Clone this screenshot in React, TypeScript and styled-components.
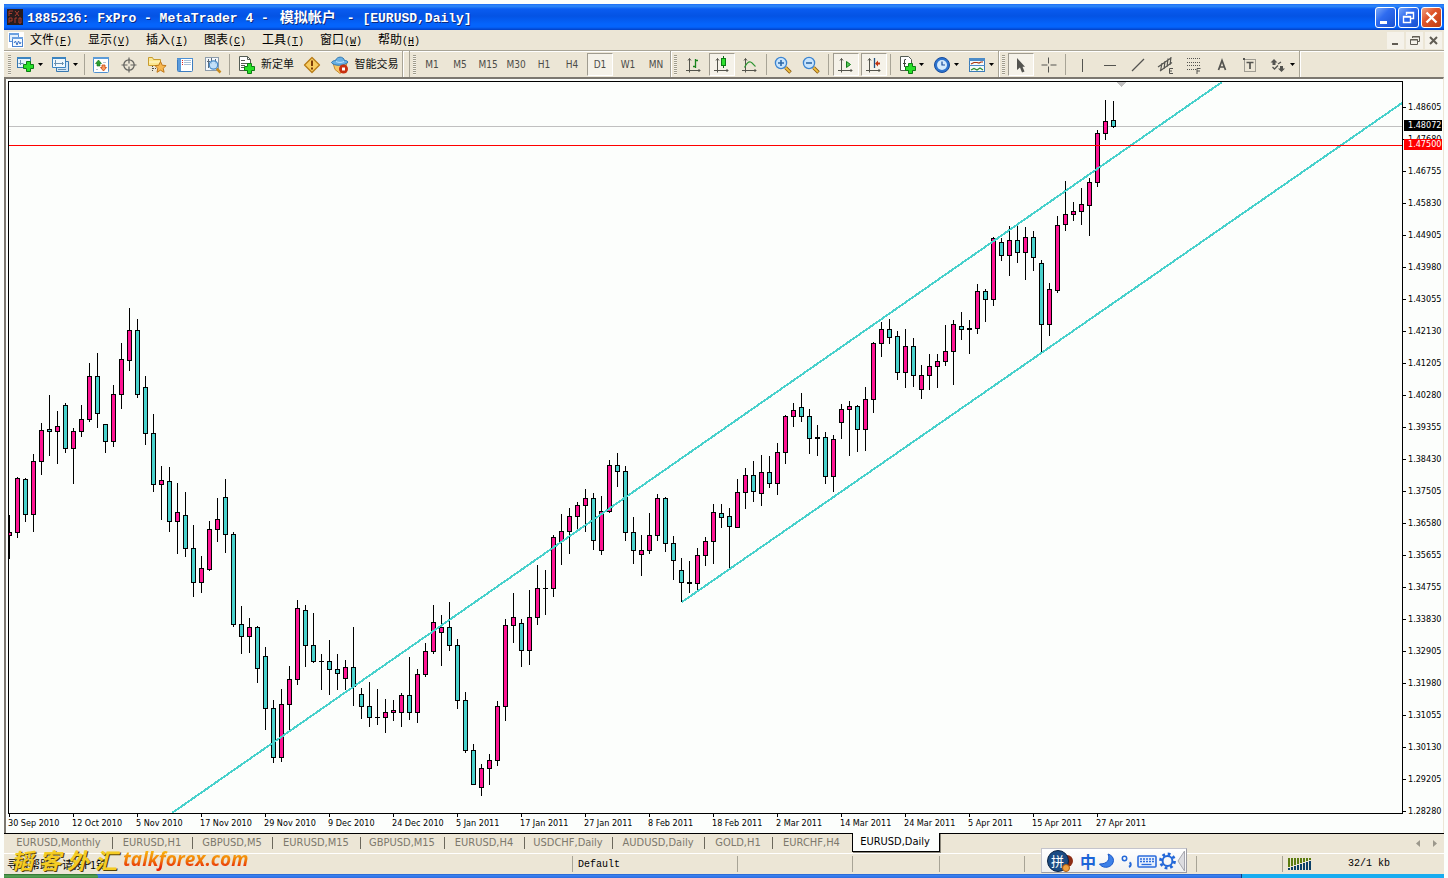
import React from "react";
import styled, { createGlobalStyle, css } from "styled-components";

const FACE = "#ece6d6";
const EDGE = "#a8a496";
const UI_FONT = '"DejaVu Sans Condensed", "DejaVu Sans", "Noto Sans CJK SC", sans-serif';
const MONO_FONT = '"Liberation Mono", "Noto Sans CJK SC", monospace';
const CJK_FONT = '"Noto Sans CJK SC", sans-serif';

const GlobalStyle = createGlobalStyle`
  *, *::before, *::after { box-sizing: border-box; }
  body { margin: 0; background: #fcfefc; overflow: hidden; }
  button { margin: 0; padding: 0; border: 0; background: none; color: inherit; font: inherit; }
`;

/* ---------- shell ---------- */

const Window = styled.div`
  display: flex;
  flex-direction: column;
  margin: 4px 4px 0;
  background: ${FACE};
  font-family: ${UI_FONT};
`;

const TitleBar = styled.header`
  display: flex;
  align-items: center;
  height: 26px;
  padding: 0 2px 0 3px;
  background: linear-gradient(#1c6cf4 0, #2f8af8 2px, #0a5cf0 5px, #0453e4 12px, #0464fc 20px, #0464fc 23px, #0340c4 26px);
`;

const TitleText = styled.h1`
  display: flex;
  flex: 1;
  align-items: baseline;
  gap: 11px;
  min-width: 0;
  margin: 0 0 0 4px;
  color: #fff;
  font: bold 13px/20px ${MONO_FONT};
  text-shadow: 1px 1px 0 #0a2a80;
  white-space: nowrap;
`;

const AccountKind = styled.span`
  font: bold 14px/20px ${CJK_FONT};
`;

const CaptionButtons = styled.div`
  display: flex;
  gap: 2px;
`;

const CaptionButton = styled.button<{ $danger?: boolean }>`
  width: 21px;
  height: 21px;
  border: 1px solid #fff;
  border-radius: 3px;
  background: ${(p) =>
    p.$danger
      ? "linear-gradient(135deg, #f0a080, #e0552c 40%, #c03c10)"
      : "linear-gradient(135deg, #7ba8f8, #2f6cf0 40%, #1850d0)"};
  svg { display: block; }
`;

const MenuBar = styled.nav`
  display: flex;
  align-items: center;
  height: 20px;
  padding: 0 2px 0 4px;
`;

const MenuList = styled.div`
  display: flex;
  flex: 1;
  padding-left: 6px;
`;

const MenuButton = styled.button`
  width: 58px;
  color: #000;
  font: 12px/18px ${CJK_FONT};
  text-align: left;
  white-space: nowrap;
`;

const MenuKey = styled.span`
  font: 10px/18px ${MONO_FONT};
`;

const ChildButtons = styled.div`
  display: flex;
  gap: 2px;
`;

const ChildButton = styled.button`
  width: 17px;
  height: 17px;
  background: #f5f2ea;
  svg { display: block; }
`;

/* ---------- toolbar ---------- */

const Toolbar = styled.div`
  display: flex;
  height: 27px;
  border-top: 1px solid ${EDGE};
  box-shadow: inset 0 1px 0 #fff;
  overflow: hidden;
`;

const Band = styled.div<{ $first?: boolean }>`
  display: flex;
  align-items: center;
  height: 26px;
  padding: 1px 0 0 ${(p) => (p.$first ? 4 : 3)}px;
  border-right: 1px solid ${EDGE};
  box-shadow: 1px 0 0 #fff;
`;

const BandGap = styled.div`
  width: 7px;
  border-right: 1px solid ${EDGE};
`;

const Grip = styled.div<{ $after?: number }>`
  width: 3px;
  height: 20px;
  margin-right: ${(p) => p.$after ?? 2}px;
  background: repeating-linear-gradient(#a09c8c 0 1px, #f6f3ea 1px 2px);
`;

const Separator = styled.div<{ $gap?: number }>`
  flex: none;
  width: 1px;
  height: 21px;
  margin: 0 ${(p) => p.$gap ?? 2}px;
  background: ${EDGE};
`;

const ToolButton = styled.button<{ $w?: number; $on?: boolean }>`
  display: flex;
  flex: none;
  align-items: center;
  justify-content: center;
  gap: 2px;
  width: ${(p) => (p.$w ?? 28) - 2}px;
  height: 23px;
  margin: 0 1px;
  border: 1px solid transparent;
  color: #4c4c48;
  font: 10px/20px ${UI_FONT};
  ${(p) =>
    p.$on &&
    css`
      border-color: #a09c90 #fff #fff #a09c90;
      background: #f5f2e9;
    `}
`;

const ToolLabel = styled.span`
  padding: 0 0 3px 3px;
  color: #111;
  font: 11px/16px ${CJK_FONT};
  white-space: nowrap;
`;

/* ---------- chart ---------- */

const ChartWindow = styled.main`
  display: grid;
  grid-template: 733px 17px / minmax(0, 1fr) 40px;
  padding: 2px 0 2px 2px;
  border: solid #7c7870;
  border-width: 2px 0 0 2px;
  border-right: 1px solid ${FACE};
  background: #fcfefc;
`;

const Plot = styled.svg`
  display: block;
  width: 100%;
  height: 733px;
  border: 1px solid #000;
`;

const PriceAxis = styled.div`
  position: relative;
  grid-row: span 2;
  padding-top: 10px;
  overflow: hidden;
`;

const Price = styled.div`
  display: flex;
  align-items: center;
  gap: 2px;
  height: 32px;
  color: #000;
  font: 9px/12px ${UI_FONT};
  &::before {
    content: "";
    width: 3px;
    height: 1px;
    background: #000;
  }
`;

const PriceTag = styled.div<{ $y: number; $c: string }>`
  position: absolute;
  top: ${(p) => p.$y}px;
  left: 1px;
  width: 38px;
  padding-left: 4px;
  background: ${(p) => p.$c};
  color: #fff;
  font: 9px/11px ${UI_FONT};
`;

const DateAxis = styled.div`
  display: flex;
  overflow: hidden;
`;

const DateMark = styled.div`
  flex: none;
  width: 64px;
  color: #000;
  font: 9px/12px ${UI_FONT};
  white-space: nowrap;
  &::before {
    content: "";
    display: block;
    width: 1px;
    height: 3px;
    margin-left: 1px;
    background: #000;
  }
`;

/* ---------- footer ---------- */

const Footer = styled.footer`
  position: relative;
`;

const TabStrip = styled.div`
  display: flex;
  height: 20px;
  padding-left: 2px;
  border-top: 1px solid #000;
`;

const Tab = styled.button<{ $w: number; $active?: boolean; $last?: boolean }>`
  position: relative;
  flex: none;
  width: ${(p) => p.$w}px;
  height: 18px;
  padding-right: 2px;
  color: #7c786c;
  font: 11px/18px ${UI_FONT};
  text-align: center;
  white-space: nowrap;
  ${(p) =>
    p.$active
      ? css`
          margin-top: -1px;
          height: 19px;
          border: solid #000;
          border-width: 0 1px 1px;
          background: #fcfefc;
          color: #000;
          box-shadow: 1px 1px 0 #8c887c;
        `
      : !p.$last &&
        css`
          &::after {
            content: "";
            position: absolute;
            top: 3px;
            right: 0;
            width: 1px;
            height: 12px;
            background: #6c685c;
          }
        `}
`;

const TabScroll = styled.div`
  display: flex;
  gap: 13px;
  align-items: center;
  margin-left: auto;
  padding-right: 7px;
  svg { display: block; }
`;

const StatusBar = styled.div`
  display: flex;
  height: 21px;
  align-items: center;
  border-top: 1px solid #fff;
  color: #000;
  font: 10px/18px ${MONO_FONT};
`;

const StatusCell = styled.div<{ $w?: number }>`
  flex: ${(p) => (p.$w ? "none" : "1")};
  width: ${(p) => (p.$w ? p.$w + "px" : "auto")};
  min-width: 0;
  height: 16px;
  padding-left: 5px;
  border-left: 1px solid ${EDGE};
  line-height: 18px;
  white-space: nowrap;
`;

const HelpCell = styled(StatusCell)`
  padding-left: 2px;
  border-left-color: transparent;
  font: 11px/16px ${CJK_FONT};
`;

const TrafficCell = styled(StatusCell)`
  display: flex;
  align-items: center;
  gap: 36px;
`;

const TaskBar = styled.div`
  display: flex;
  height: 4px;
  background: linear-gradient(#1c54c0, #3c84f0 1px, #2c6ce0);
`;

const StartEdge = styled.div`
  width: 94px;
  border-radius: 0 3px 0 0;
  background: linear-gradient(#2c6c2c, #58a458 2px, #3c8c3c);
`;

const TrayEdge = styled.div`
  width: 203px;
  margin-left: auto;
  border-left: 1px solid #103c80;
  background: #18acf0;
`;

const Watermark = styled.div`
  position: absolute;
  top: 12px;
  left: 7px;
  display: flex;
  align-items: center;
  gap: 6px;
  height: 28px;
  white-space: nowrap;
  pointer-events: none;
`;

const MarkCjk = styled.span`
  display: flex;
  gap: 6px;
  color: #f4cc24;
  font: italic 700 22px/28px ${CJK_FONT};
  text-shadow: 1px 1px 0 #504008;
`;

const MarkUrl = styled.span`
  background: linear-gradient(#f8b010 25%, #f07808 55%, #e82808 80%);
  background-clip: text;
  color: transparent;
  font: italic 700 19px/28px "Open Sans", "Noto Sans", sans-serif;
`;

const ImeBar = styled.div`
  position: absolute;
  top: 15px;
  right: 257px;
  display: flex;
  align-items: center;
  width: 146px;
  height: 25px;
  padding-left: 5px;
  border: 1px solid #c4c4cc;
  border-right-color: #9c9ca4;
  border-bottom-color: #9c9ca4;
  background: linear-gradient(#fff, #f0f0f0);
  color: #1c64d8;
  svg { display: block; flex: none; }
`;

const ImeMode = styled.span`
  width: 20px;
  margin-left: 4px;
  font: bold 16px/20px ${CJK_FONT};
  text-align: center;
`;

/* ---------- icons ---------- */

type IconProps = { children: React.ReactNode; w?: number; h?: number };

const Icon = ({ children, w = 20, h = 20 }: IconProps) => (
  <svg width={w} height={h} viewBox={`0 0 ${w} ${h}`} fill="none" aria-hidden="true">
    {children}
  </svg>
);

const DropArrow = () => (
  <Icon w={5} h={3}>
    <path d="M0 0h5L2.500 3z" fill="#000" />
  </Icon>
);

const Plus = ({ x, y }: { x: number; y: number }) => (
  <path
    transform={`translate(${x} ${y})`}
    d="M3.500.5h4v3h3v4h-3v3h-4v-3h-3v-4h3z"
    fill="#28e028"
    stroke="#0c7c14"
  />
);

const NewChartIcon = () => (
  <Icon>
    <rect x="1.500" y="2.500" width="13" height="10" fill="#e8f4fc" stroke="#3878b0" />
    <path d="M1 2h14v2H1z" fill="#3c84c0" />
    <path d="M4.500 5v5M2.500 8.500h5" stroke="#6890b0" />
    <Plus x={7} y={6} />
  </Icon>
);

const ProfilesIcon = () => (
  <Icon>
    <path d="M5.500 6.500h12v10h-12z" fill="#d4e8f8" stroke="#3878b0" />
    <path d="M1.500 2.500h13v10h-13z" fill="#f0f8fc" stroke="#3c84c0" />
    <path d="M1 2h14v2H1z" fill="#3c84c0" />
    <path d="M4.500 5v6M3 8.500h9M11 7l1.500 1.500L11 10M7 14.500h8" stroke="#6890b0" />
  </Icon>
);

const MarketWatchIcon = () => (
  <Icon>
    <rect x="2.500" y="2.500" width="15" height="15" rx="1" fill="#fff" stroke="#5090d0" />
    <path d="M2 2h16v2H2z" fill="#5c9cd8" />
    <path d="M7.500 5l3 3.500H9v2.500H6V8.500H4.500z" fill="#2ca030" stroke="#107418" strokeWidth=".6" />
    <path d="M12.500 16l3-3.500H14V10h-3v2.500H9.500z" fill="#f89c60" stroke="#c84810" strokeWidth=".8" />
    <path d="M5 14.500h2M12 7.500h3" stroke="#b4c4d4" />
  </Icon>
);

const TargetIcon = () => (
  <Icon>
    <circle cx="10" cy="10" r="5.200" stroke="#646460" strokeWidth="1.300" />
    <path d="M10 2.500v6M10 11.500v6M2.500 10h6M11.500 10h6" stroke="#646460" strokeWidth="1.200" />
  </Icon>
);

const NavigatorIcon = () => (
  <Icon>
    <path d="M1.500 2.500h4l1 2h7v6h-12z" fill="#fce890" stroke="#c89c30" />
    <path d="M2 7h11" stroke="#fff8d0" />
    <path d="M5.500 11v6M6 13.500h3" stroke="#504c40" strokeDasharray="1 1" />
    <path d="M13.500 6.500l1.700 3.700 3.900.4-2.900 2.700.9 4-3.600-2.100-3.500 2.100.8-4L8 10.600l3.800-.4z" fill="#f8b850" stroke="#c07818" />
  </Icon>
);

const TerminalIcon = () => (
  <Icon>
    <rect x="2.500" y="3.500" width="15" height="13" rx="1" fill="#fff" stroke="#3c7cc0" />
    <path d="M2 3h16v1H2z" fill="#4c90d4" />
    <path d="M3 4h3v12H3z" fill="#5c9cdc" />
    <path d="M7 5.500h1M7 7.500h1M7 9.500h1" stroke="#e02020" />
    <path d="M9 5.500h7M9 7.500h7M9 9.500h7" stroke="#a8c0d8" />
  </Icon>
);

const TesterIcon = () => (
  <Icon>
    <rect x="2.500" y="2.500" width="13" height="13" fill="#f4f8fc" stroke="#8c9cac" />
    <path d="M5.500 4v9M8.500 3v6M12.500 4v5M4 6.500h3" stroke="#5c6c7c" />
    <path d="M13.500 13.500l4 4" stroke="#c88c20" strokeWidth="2.500" />
    <circle cx="10.500" cy="10" r="4.200" fill="#b8dcf8" fillOpacity=".85" stroke="#4c8cc8" strokeWidth="1.300" />
  </Icon>
);

const NewOrderIcon = () => (
  <Icon>
    <path d="M3.500 1.500h8l3 3v11h-11z" fill="#fff" stroke="#545c54" />
    <path d="M11.500 1.500v3h3M5 5.500h4M5 8.500h7M5 10.500h4M5 12.500h4" stroke="#545c54" />
    <Plus x={8} y={8} />
  </Icon>
);

const WarnIcon = () => (
  <Icon>
    <path d="M10 2.500l7.500 7.500-7.500 7.500L2.500 10z" fill="#f8cc60" stroke="#b87c18" strokeWidth="1.300" strokeLinejoin="round" />
    <path d="M10 5.500v5.500M10 12.500v2" stroke="#7c3c08" strokeWidth="2" />
  </Icon>
);

const ExpertIcon = () => (
  <Icon>
    <path d="M3 8h14l-2 6-5 4.500-5-4z" fill="#f8c868" stroke="#c88c30" />
    <path d="M1.500 7.500c2 4 14 3.500 16.500-.5-1-1.500-2.500-1.500-3.500-1.500C13.500 1 7 1 5.500 5.500 4 5.500 2.500 6 1.500 7.500z" fill="#68b0e4" stroke="#2c74b0" />
    <path d="M6 6.500c2 1.200 6 1.200 8 0" stroke="#c0e4fc" />
    <circle cx="13.500" cy="14" r="4.500" fill="#c83010" />
    <rect x="12" y="12.500" width="3" height="3" fill="#fff" />
  </Icon>
);

const Axes = () => (
  <path d="M5.500 3.500v14M2 15.500h14M4 5.500l1.500-2 1.500 2M14.500 14l1.500 1.500-1.500 1.500" stroke="#54544c" strokeWidth="1" />
);

const BarsIcon = () => (
  <Icon>
    <Axes />
    <path d="M11.500 4v9M12 5.500h2M9 11.500h2" stroke="#18841c" strokeWidth="1.300" />
  </Icon>
);

const CandlesIcon = () => (
  <Icon>
    <Axes />
    <path d="M11.500 1v12" stroke="#0c6c14" />
    <rect x="9.500" y="3.500" width="4" height="7" fill="#30e030" stroke="#0c7c14" />
  </Icon>
);

const LineIcon = () => (
  <Icon>
    <Axes />
    <path d="M4.500 12.500c2-4 4-6 6-5.500 2 .5 3 3 5 4.500" stroke="#2c9430" strokeWidth="1.200" />
  </Icon>
);

const ZoomIcon = ({ plus }: { plus?: boolean }) => (
  <Icon>
    <path d="M12.500 12.500l5 5" stroke="#8c5c10" strokeWidth="3.600" />
    <path d="M12.500 12.500l4.600 4.600" stroke="#f0c040" strokeWidth="1.800" />
    <circle cx="8" cy="8" r="5.600" fill="#c8e4fc" stroke="#3c84d0" strokeWidth="1.300" />
    <path d={plus ? "M8 5v6M5 8h6" : "M5 8h6"} stroke="#2c68a8" strokeWidth="1.600" />
  </Icon>
);

const ScrollIcon = () => (
  <Icon>
    <Axes />
    <path d="M10.500 6.500v6l4-3z" fill="#58c858" stroke="#107c18" />
  </Icon>
);

const ShiftIcon = () => (
  <Icon>
    <Axes />
    <path d="M10.500 3v10" stroke="#205080" strokeWidth="1.300" />
    <path d="M11 8.500l3-3v2h2v2h-2v2z" fill="#c03410" />
  </Icon>
);

const IndicatorsIcon = () => (
  <Icon>
    <path d="M3.500 1.500h8l3 3v11h-11z" fill="#fff" stroke="#545c54" />
    <path d="M7.500 5v7M6 8.500h3M9 4.500h-1.500" stroke="#3c443c" />
    <Plus x={8} y={8} />
  </Icon>
);

const ClockIcon = () => (
  <Icon>
    <circle cx="10" cy="10" r="7.500" fill="#2c74d0" stroke="#184c9c" />
    <circle cx="10" cy="10" r="5" fill="#d4eafc" />
    <path d="M10 6.500V10h3" stroke="#184c9c" strokeWidth="1.200" />
  </Icon>
);

const TemplateIcon = () => (
  <Icon>
    <rect x="2.500" y="3.500" width="15" height="13" fill="#f4fafc" stroke="#3c7cb8" />
    <path d="M2 3h16v3H2zM2 10h16v1H2z" fill="#4c8cc8" />
    <path d="M4 9l3-1.500h3L12 8l2-1h2" stroke="#a83410" strokeWidth="1.200" />
    <path d="M4 15l3-1.500 3 1.500 3-2 3 2" stroke="#2c8c2c" strokeWidth="1.200" />
  </Icon>
);

const INK = "#545450";

const CursorIcon = () => (
  <Icon>
    <path d="M6 3v12l3-2.500 2 5 2.500-1-2-4.800H14z" fill={INK} />
  </Icon>
);
const CrosshairIcon = () => (
  <Icon>
    <path d="M9.500 2.500v6M9.500 11.500v6M2.500 10h6M11.500 10h6" stroke={INK} />
  </Icon>
);
const VLineIcon = () => (
  <Icon>
    <path d="M10.500 4v13" stroke={INK} />
  </Icon>
);
const HLineIcon = () => (
  <Icon>
    <path d="M4 10.500h12" stroke={INK} />
  </Icon>
);
const TrendIcon = () => (
  <Icon>
    <path d="M4 16L16 4" stroke={INK} strokeWidth="1.200" />
  </Icon>
);
const ChannelIcon = () => (
  <Icon>
    <path d="M2 12L15 3M4 16L16 7.500M6 8l-1.500 8M9 6l-1 8M12 3.500l-1 8.500M15 2l-1 8" stroke={INK} strokeWidth="1.200" />
    <path d="M17 13.500h-3.500v5H17M13.500 16H16" stroke={INK} />
  </Icon>
);
const FiboIcon = () => (
  <Icon>
    <path d="M3 3.500h13M3 7.500h13M3 10.500h13M3 14.500h9" stroke={INK} strokeDasharray="1 1" />
    <path d="M16.500 13.500h-3.500V19M13 16h3" stroke={INK} />
  </Icon>
);
const TextIcon = () => (
  <Icon>
    <path d="M6.500 15L10 5.500 13.500 15M8 12h4" stroke={INK} strokeWidth="1.700" />
  </Icon>
);
const LabelIcon = () => (
  <Icon>
    <rect x="4.500" y="4.500" width="11" height="12" stroke={INK} strokeDasharray="1 1" />
    <path d="M6.500 7.500h7M10 7.500V14" stroke={INK} strokeWidth="1.700" />
    <path d="M3 3h2v2H3z" fill={INK} />
  </Icon>
);
const ArrowsIcon = () => (
  <Icon>
    <path d="M6 4l3.500 3.500H7.500V10h-3V7.500H2.500zM13.500 17L10 13.500h2V11h3v2.500h2z" fill={INK} />
    <path d="M4.500 12l2 2L10 10.500M10 9l3-2" stroke={INK} strokeWidth="1.300" />
  </Icon>
);

const AppIcon = () => (
  <Icon w={16} h={16}>
    <rect width="16" height="16" fill="#281c1c" />
    <path d="M2 7V2h4M2 4.500h3M8 2l4 5M12 2L8 7M2 14V9h3v3H2M8 14V9h2M12 9h2v5h-2z" stroke="#a83c30" />
  </Icon>
);

const DocIcon = () => (
  <Icon w={16} h={16}>
    <rect width="16" height="16" fill="#fff" />
    <rect x="1.500" y="1.500" width="9" height="8" fill="#e4f0fc" stroke="#5c90d8" />
    <rect x="4.500" y="5.500" width="10" height="9" fill="#f4faff" stroke="#4c84d0" />
    <path d="M1 1h10v2H1zM4 5h11v2H4z" fill="#6ca0e0" />
    <path d="M6 11l1.500-2 1.500 4 1.500-4 1.500 3 1-2" stroke="#3c74c8" />
  </Icon>
);

const SignalIcon = () => (
  <Icon w={24} h={12}>
    {Array.from({ length: 8 }, (_, i) => (
      <React.Fragment key={i}>
        <rect x={i * 3} y={0} width={2} height={9 - i} fill="#5c7c10" />
        <rect x={i * 3} y={10 - i} width={2} height={2 + i} fill="#0c4068" />
      </React.Fragment>
    ))}
  </Icon>
);

const ImeBall = () => (
  <Icon w={27} h={22}>
    <circle cx="20" cy="11" r="6" fill="#8c2c14" />
    <circle cx="11" cy="11" r="10.500" fill="#1c4c84" stroke="#0c2444" />
    <circle cx="19" cy="18" r="3.500" fill="#f0a040" stroke="#a85c10" />
    <text x="4" y="16" fill="#fff" fontSize="13" fontFamily="Noto Sans CJK SC, sans-serif">拼</text>
  </Icon>
);

const ImeTools = () => (
  <Icon w={87} h={20}>
    <path d="M10 3c2.500 6-1 10-8.500 10C5 18.500 15 17 15.500 9.500 15.500 6 13 4 10 3z" fill="#3c80e8" stroke="#1c58c8" />
    <circle cx="26.500" cy="7.500" r="2.200" stroke="#2468d8" strokeWidth="1.500" />
    <path d="M31.500 11.500c2 1 1.500 3.500-.5 4.500" stroke="#2468d8" strokeWidth="2" />
    <rect x="40" y="5" width="18" height="11" rx="1" fill="#e8f0fc" stroke="#2c6cdc" strokeWidth="1.600" />
    <path d="M42 8h14M42 10.500h14" stroke="#2c6cdc" strokeWidth="1.300" strokeDasharray="2 1" />
    <path d="M43.500 13.500h10" stroke="#2c6cdc" strokeWidth="1.300" />
    <circle cx="69.500" cy="10" r="7" stroke="#2468d8" strokeWidth="2.800" strokeDasharray="2.750 2.750" />
    <circle cx="69.500" cy="10" r="4.900" stroke="#2468d8" strokeWidth="2" />
    <path d="M86.500 0v20L80 10z" fill="#dcdce0" stroke="#a8a8b0" />
  </Icon>
);

/* ---------- data ---------- */

type Dir = "u" | "d" | "n";
// high, body top, body bottom, low (screen rows measured from the window's top edge), direction
const BARS: [number, number, number, number, Dir][] = [
  [515, 532, 536, 559, "u"], [477, 478, 533, 538, "u"], [478, 479, 515, 522, "d"], [454, 461, 515, 532, "u"],
  [423, 430, 462, 475, "u"], [395, 429, 432, 456, "d"], [411, 426, 432, 464, "u"], [403, 405, 449, 453, "d"],
  [428, 431, 449, 484, "u"], [405, 419, 432, 437, "u"], [363, 376, 420, 422, "u"], [353, 376, 414, 428, "d"],
  [424, 424, 442, 453, "d"], [385, 394, 442, 447, "u"], [343, 359, 395, 409, "u"], [308, 330, 361, 371, "u"],
  [319, 330, 395, 398, "d"], [376, 387, 434, 445, "d"], [414, 433, 485, 492, "d"], [466, 480, 485, 520, "u"],
  [467, 481, 522, 532, "d"], [483, 512, 522, 554, "u"], [492, 515, 549, 557, "d"], [525, 548, 583, 597, "d"],
  [556, 568, 583, 593, "u"], [521, 529, 570, 571, "u"], [498, 519, 530, 542, "u"], [479, 497, 535, 553, "d"],
  [532, 534, 625, 627, "d"], [606, 624, 637, 654, "d"], [618, 627, 637, 653, "u"], [626, 627, 669, 683, "d"],
  [647, 656, 709, 730, "d"], [700, 708, 758, 763, "d"], [689, 704, 758, 762, "u"], [666, 679, 705, 730, "u"],
  [600, 608, 680, 685, "u"], [605, 610, 646, 667, "d"], [613, 645, 662, 663, "d"], [654, 661, 662, 690, "n"],
  [640, 661, 670, 695, "d"], [654, 669, 674, 690, "d"], [660, 667, 679, 690, "u"], [627, 667, 687, 706, "d"],
  [688, 694, 707, 719, "d"], [682, 706, 718, 727, "d"], [689, 717, 718, 725, "n"], [699, 712, 718, 733, "u"],
  [700, 710, 713, 721, "u"], [693, 695, 713, 727, "u"], [657, 695, 713, 720, "d"], [669, 674, 713, 723, "u"],
  [643, 651, 675, 677, "u"], [605, 622, 652, 654, "u"], [615, 627, 633, 666, "u"], [602, 627, 646, 651, "d"],
  [639, 645, 701, 709, "d"], [692, 700, 751, 753, "d"], [744, 750, 785, 785, "d"], [764, 768, 788, 796, "u"],
  [754, 760, 769, 785, "u"], [701, 706, 761, 766, "u"], [619, 625, 707, 721, "u"], [593, 617, 626, 643, "u"],
  [619, 623, 651, 667, "d"], [590, 617, 651, 665, "u"], [565, 588, 618, 625, "u"], [570, 588, 589, 615, "n"],
  [535, 537, 589, 597, "u"], [514, 531, 542, 565, "u"], [508, 516, 532, 554, "u"], [502, 505, 517, 530, "u"],
  [489, 498, 506, 532, "u"], [493, 498, 541, 550, "d"], [496, 511, 551, 555, "u"], [460, 465, 512, 513, "u"],
  [453, 465, 472, 487, "d"], [466, 471, 533, 541, "d"], [517, 532, 551, 564, "d"], [535, 550, 555, 576, "u"],
  [513, 535, 551, 554, "u"], [494, 498, 536, 541, "u"], [497, 498, 544, 552, "d"], [536, 543, 561, 580, "d"],
  [558, 570, 583, 602, "d"], [561, 582, 584, 593, "n"], [548, 555, 584, 591, "u"], [537, 541, 556, 566, "u"],
  [504, 512, 542, 564, "u"], [504, 513, 518, 528, "d"], [508, 516, 527, 569, "d"], [479, 492, 528, 528, "u"],
  [468, 475, 493, 509, "u"], [461, 475, 492, 502, "d"], [455, 472, 494, 506, "u"], [456, 472, 484, 488, "d"],
  [443, 452, 484, 495, "u"], [415, 416, 453, 464, "u"], [403, 410, 417, 427, "u"], [393, 407, 417, 422, "d"],
  [409, 416, 439, 454, "d"], [425, 437, 439, 456, "n"], [432, 437, 477, 484, "d"], [435, 439, 477, 492, "u"],
  [404, 409, 423, 439, "u"], [401, 406, 410, 456, "u"], [405, 406, 430, 452, "d"], [387, 399, 430, 451, "u"],
  [342, 343, 400, 413, "u"], [322, 329, 344, 357, "u"], [319, 329, 338, 344, "d"], [331, 336, 373, 380, "d"],
  [329, 346, 373, 388, "u"], [338, 346, 376, 387, "d"], [365, 375, 390, 399, "u"], [354, 366, 376, 390, "u"],
  [354, 361, 367, 388, "u"], [325, 351, 362, 366, "u"], [320, 324, 352, 385, "u"], [312, 326, 330, 340, "d"],
  [320, 328, 330, 354, "n"], [284, 291, 329, 334, "u"], [289, 291, 300, 322, "d"], [237, 238, 300, 306, "u"],
  [238, 242, 256, 261, "d"], [226, 240, 256, 276, "u"], [226, 240, 253, 263, "d"], [227, 237, 253, 280, "u"],
  [231, 237, 258, 271, "d"], [260, 263, 325, 352, "d"], [283, 289, 325, 336, "u"], [216, 225, 291, 293, "u"],
  [181, 214, 225, 231, "u"], [202, 211, 215, 221, "u"], [188, 204, 212, 225, "u"], [178, 182, 206, 236, "u"],
  [130, 133, 183, 187, "u"], [100, 121, 134, 140, "u"], [101, 120, 127, 128, "d"],
];

const TOP = 82;
const FILL = { u: "#ff1493", d: "#48d1cc", n: "#000" };

const Bar = ({ x, bar: [high, top, bottom, low, dir] }: { x: number; bar: (typeof BARS)[number] }) => (
  <g>
    <rect x={x} y={high - TOP} width={1} height={low - high} />
    <rect x={x - 2} y={top - TOP} width={5} height={bottom - top} />
    {dir !== "n" && bottom - top > 2 && (
      <rect x={x - 1} y={top - TOP + 1} width={3} height={bottom - top - 2} fill={FILL[dir]} />
    )}
  </g>
);

const PRICES = [
  "1.48605", "1.47680", "1.46755", "1.45830", "1.44905", "1.43980", "1.43055", "1.42130", "1.41205", "1.40280",
  "1.39355", "1.38430", "1.37505", "1.36580", "1.35655", "1.34755", "1.33830", "1.32905", "1.31980", "1.31055",
  "1.30130", "1.29205", "1.28280",
];

const DATES = [
  "30 Sep 2010", "12 Oct 2010", "5 Nov 2010", "17 Nov 2010", "29 Nov 2010", "9 Dec 2010", "24 Dec 2010",
  "5 Jan 2011", "17 Jan 2011", "27 Jan 2011", "8 Feb 2011", "18 Feb 2011", "2 Mar 2011", "14 Mar 2011",
  "24 Mar 2011", "5 Apr 2011", "15 Apr 2011", "27 Apr 2011",
];

const MENUS = [
  ["文件", "F"], ["显示", "V"], ["插入", "I"], ["图表", "C"], ["工具", "T"], ["窗口", "W"], ["帮助", "H"],
];

const PERIODS = ["M1", "M5", "M15", "M30", "H1", "H4", "D1", "W1", "MN"];

const TABS: [string, number][] = [
  ["EURUSD,Monthly", 107], ["EURUSD,H1", 80], ["GBPUSD,M5", 80], ["EURUSD,M15", 88], ["GBPUSD,M15", 84],
  ["EURUSD,H4", 80], ["USDCHF,Daily", 88], ["AUDUSD,Daily", 92], ["GOLD,H1", 68], ["EURCHF,H4", 79],
  ["EURUSD,Daily", 88],
];

export default function App() {
  return (
    <>
      <GlobalStyle />
      <Window>
        <TitleBar>
          <AppIcon />
          <TitleText>
            <span>1885236: FxPro - MetaTrader 4 -</span>
            <AccountKind>模拟帐户</AccountKind>
            <span>- [EURUSD,Daily]</span>
          </TitleText>
          <CaptionButtons>
            <CaptionButton aria-label="Minimize">
              <Icon w={19} h={19}><path d="M4 13h7v3H4z" fill="#fff" /></Icon>
            </CaptionButton>
            <CaptionButton aria-label="Restore">
              <Icon w={19} h={19}>
                <path d="M7.500 7V4.500h7v6H12M7 5h8" stroke="#fff" strokeWidth="1.400" />
                <path d="M4.500 8.500h7v6h-7zM4 9h8" stroke="#fff" strokeWidth="1.400" />
              </Icon>
            </CaptionButton>
            <CaptionButton $danger aria-label="Close">
              <Icon w={19} h={19}><path d="M4.500 4.500l10 10M14.500 4.500l-10 10" stroke="#fff" strokeWidth="2.400" /></Icon>
            </CaptionButton>
          </CaptionButtons>
        </TitleBar>

        <MenuBar>
          <DocIcon />
          <MenuList>
            {MENUS.map(([name, key]) => (
              <MenuButton key={key}>
                {name}
                <MenuKey>(<u>{key}</u>)</MenuKey>
              </MenuButton>
            ))}
          </MenuList>
          <ChildButtons>
            <ChildButton aria-label="Minimize chart">
              <Icon w={17} h={17}><path d="M5 11h6v2H5z" fill="#605c54" /></Icon>
            </ChildButton>
            <ChildButton aria-label="Restore chart">
              <Icon w={17} h={17}>
                <path d="M6.500 6V4.500h7v5H12M6 5h8" stroke="#605c54" />
                <path d="M4.500 7.500h7v5h-7zM4 8h8" stroke="#605c54" />
              </Icon>
            </ChildButton>
            <ChildButton aria-label="Close chart">
              <Icon w={17} h={17}><path d="M5 5l7 7M12 5l-7 7" stroke="#605c54" strokeWidth="2" /></Icon>
            </ChildButton>
          </ChildButtons>
        </MenuBar>

        <Toolbar>
          <Band $first>
            <Grip $after={1} />
            <ToolButton $w={35} aria-label="New chart"><NewChartIcon /><DropArrow /></ToolButton>
            <ToolButton $w={35} aria-label="Profiles"><ProfilesIcon /><DropArrow /></ToolButton>
            <Separator />
            <ToolButton aria-label="Market watch"><MarketWatchIcon /></ToolButton>
            <ToolButton aria-label="Data window"><TargetIcon /></ToolButton>
            <ToolButton aria-label="Navigator"><NavigatorIcon /></ToolButton>
            <ToolButton aria-label="Terminal"><TerminalIcon /></ToolButton>
            <ToolButton aria-label="Strategy tester"><TesterIcon /></ToolButton>
            <Separator />
            <ToolButton $w={66}><NewOrderIcon /><ToolLabel>新定单</ToolLabel></ToolButton>
            <ToolButton aria-label="MetaEditor"><WarnIcon /></ToolButton>
            <ToolButton $w={76}><ExpertIcon /><ToolLabel>智能交易</ToolLabel></ToolButton>
          </Band>
          <BandGap />
          <Band>
            <Grip />
            {PERIODS.map((p) => (
              <ToolButton key={p} $on={p === "D1"}>{p}</ToolButton>
            ))}
          </Band>
          <Band>
            <Grip $after={3} />
            <ToolButton aria-label="Bar chart"><BarsIcon /></ToolButton>
            <ToolButton $on aria-label="Candlesticks"><CandlesIcon /></ToolButton>
            <ToolButton aria-label="Line chart"><LineIcon /></ToolButton>
            <Separator />
            <ToolButton aria-label="Zoom in"><ZoomIcon plus /></ToolButton>
            <ToolButton aria-label="Zoom out"><ZoomIcon /></ToolButton>
            <Separator $gap={3} />
            <ToolButton $on aria-label="Auto scroll"><ScrollIcon /></ToolButton>
            <ToolButton $on aria-label="Chart shift"><ShiftIcon /></ToolButton>
            <Separator />
            <ToolButton $w={35} aria-label="Indicators"><IndicatorsIcon /><DropArrow /></ToolButton>
            <ToolButton $w={35} aria-label="Periods"><ClockIcon /><DropArrow /></ToolButton>
            <ToolButton $w={35} aria-label="Templates"><TemplateIcon /><DropArrow /></ToolButton>
          </Band>
          <Band>
            <Grip />
            <ToolButton $on aria-label="Cursor"><CursorIcon /></ToolButton>
            <ToolButton aria-label="Crosshair"><CrosshairIcon /></ToolButton>
            <Separator />
            <ToolButton aria-label="Vertical line"><VLineIcon /></ToolButton>
            <ToolButton aria-label="Horizontal line"><HLineIcon /></ToolButton>
            <ToolButton aria-label="Trendline"><TrendIcon /></ToolButton>
            <ToolButton aria-label="Channel"><ChannelIcon /></ToolButton>
            <ToolButton aria-label="Fibonacci"><FiboIcon /></ToolButton>
            <ToolButton aria-label="Text"><TextIcon /></ToolButton>
            <ToolButton aria-label="Text label"><LabelIcon /></ToolButton>
            <ToolButton $w={35} aria-label="Arrows"><ArrowsIcon /><DropArrow /></ToolButton>
          </Band>
        </Toolbar>

        <ChartWindow>
          <Plot shapeRendering="crispEdges" role="img" aria-label="EURUSD daily candlestick chart">
            <rect x={0} y={44} width="100%" height={1} fill="#c0c0c0" />
            {BARS.map((bar, i) => (
              <Bar key={i} x={i * 8} bar={bar} />
            ))}
            <path d="M163 731L1213 0M673 520L1393 21" stroke="#48d1cc" strokeWidth={2} fill="none" />
            <rect x={0} y={63} width="100%" height={1} fill="#f00" />
            <path d="M1108 0h9l-4.500 5z" fill="#c0c0c0" />
          </Plot>
          <PriceAxis>
            {PRICES.map((p) => (
              <Price key={p}>{p}</Price>
            ))}
            <PriceTag $y={39} $c="#000">1.48072</PriceTag>
            <PriceTag $y={58} $c="#f00">1.47500</PriceTag>
          </PriceAxis>
          <DateAxis>
            {DATES.map((d) => (
              <DateMark key={d}>{d}</DateMark>
            ))}
          </DateAxis>
        </ChartWindow>

        <Footer>
          <TabStrip>
            {TABS.map(([name, w], i) => (
              <Tab key={name} $w={w} $active={i === TABS.length - 1} $last={i === TABS.length - 2}>
                {name}
              </Tab>
            ))}
            <TabScroll>
              <Icon w={4} h={7}><path d="M4 0v7L0 3.500z" fill="#9c988c" /></Icon>
              <Icon w={4} h={7}><path d="M0 0v7l4-3.500z" fill="#9c988c" /></Icon>
            </TabScroll>
          </TabStrip>
          <StatusBar>
            <HelpCell $w={568}>寻求帮助，请按F1键</HelpCell>
            <StatusCell $w={165}>Default</StatusCell>
            <StatusCell $w={115} />
            <StatusCell $w={87} />
            <StatusCell $w={85} />
            <StatusCell />
            <StatusCell $w={86} />
            <TrafficCell $w={162}>
              <SignalIcon />
              <span>32/1 kb</span>
            </TrafficCell>
          </StatusBar>
          <Watermark>
            <MarkCjk>
              <span>韬</span>
              <span>客</span>
              <span>外</span>
              <span>汇</span>
            </MarkCjk>
            <MarkUrl>talkforex.com</MarkUrl>
          </Watermark>
          <ImeBar>
            <ImeBall />
            <ImeMode>中</ImeMode>
            <ImeTools />
          </ImeBar>
        </Footer>
        <TaskBar>
          <StartEdge />
          <TrayEdge />
        </TaskBar>
      </Window>
    </>
  );
}
